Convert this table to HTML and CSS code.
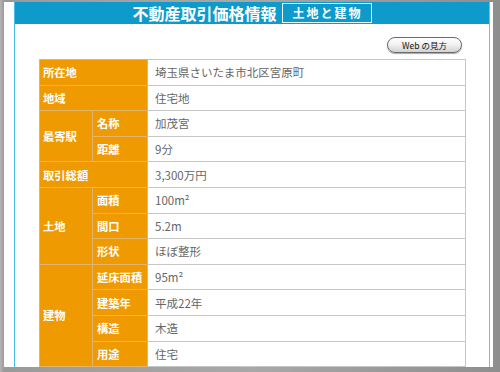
FILE: index.html
```html
<!DOCTYPE html>
<html lang="ja">
<head>
<meta charset="utf-8">
<link rel="stylesheet" href="styles.css">
</head>
<body>
<div class="frame">
  <div class="sheet">
    <div class="panel">
      <div class="header">
        <span class="title">不動産取引価格情報</span>
        <span class="tag">土地と建物</span>
      </div>
      <div class="content">
        <div class="tools"><span class="btn">Web の見方</span></div>
        <table class="info">
          <colgroup><col class="c1"><col class="c2"><col class="c3"></colgroup>
          <tr><th colspan="2" class="main">所在地</th><td>埼玉県さいたま市北区宮原町</td></tr>
          <tr><th colspan="2" class="main">地域</th><td>住宅地</td></tr>
          <tr><th rowspan="2" class="main">最寄駅</th><th class="sub">名称</th><td>加茂宮</td></tr>
          <tr><th class="sub">距離</th><td>9分</td></tr>
          <tr><th colspan="2" class="main">取引総額</th><td>3,300万円</td></tr>
          <tr><th rowspan="3" class="main">土地</th><th class="sub">面積</th><td>100m²</td></tr>
          <tr><th class="sub">間口</th><td>5.2m</td></tr>
          <tr><th class="sub">形状</th><td>ほぼ整形</td></tr>
          <tr><th rowspan="4" class="main">建物</th><th class="sub">延床面積</th><td>95m²</td></tr>
          <tr><th class="sub">建築年</th><td>平成22年</td></tr>
          <tr><th class="sub">構造</th><td>木造</td></tr>
          <tr><th class="sub">用途</th><td>住宅</td></tr>
        </table>
      </div>
    </div>
  </div>
</div>
</body>
</html>
```
FILE: styles.css
```css
html, body {
  margin: 0;
  padding: 0;
}
body {
  width: 500px;
  height: 372px;
  overflow: hidden;
  font-family: "Noto Sans CJK JP", "Noto Sans", sans-serif;
}
.frame {
  width: 500px;
  height: 372px;
  box-sizing: border-box;
  padding: 2px 7px 5px 4px;
  background: linear-gradient(to right, #b4b4b4 0, #9a9a9a 4px, #a8a8a8 50%, #8e8e8e 100%);
}
.sheet {
  height: 100%;
  background: #fff;
  padding: 0 3px 0 10px;
  box-sizing: border-box;
  overflow: hidden;
}
.panel {
  height: 100%;
  border-left: 1px solid #45bfe6;
  border-right: 1px solid #7bbfcb;
  display: flex;
  flex-direction: column;
}
.header {
  height: 22px;
  flex: none;
  background: #0e9bcc;
  display: flex;
  align-items: center;
  justify-content: center;
  gap: 5px;
  color: #fff;
}
.title {
  font-size: 16px;
  font-weight: bold;
  line-height: 20px;
}
.tag {
  box-sizing: border-box;
  height: 20px;
  border: 1px solid #e8f6fb;
  font-size: 12px;
  font-weight: bold;
  letter-spacing: 2px;
  line-height: 18px;
  padding: 0 8px 0 10px;
}
.content {
  padding: 13px 24px 0 24px;
}
.tools {
  display: flex;
  justify-content: flex-end;
  padding-right: 3px;
  margin-bottom: 6px;
}
.btn {
  box-sizing: border-box;
  width: 75px;
  height: 16px;
  border: 1px solid #6a6a6a;
  border-radius: 8px;
  background: linear-gradient(to bottom, #ffffff 0%, #f2f2f2 45%, #d2d2d2 100%);
  box-shadow: 0 1px 1px rgba(0,0,0,0.35);
  font-size: 8.5px;
  line-height: 14px;
  text-align: center;
  color: #111;
}
.info {
  width: 426px;
  border-collapse: collapse;
  table-layout: fixed;
}
.c1 { width: 53px; }
.c2 { width: 55px; }
.c3 { width: 318px; }
.info tr {
  height: 25.6px;
}
.info th {
  background: #ee9a00;
  color: #fff;
  font-weight: bold;
  font-size: 11.3px;
  text-align: left;
  border: 1px solid #e3b46e;
  padding: 0;
  line-height: 14px;
}
.info th.main { padding-left: 3px; }
.info th.sub { padding-left: 4px; }
.info td {
  border: 1px solid #c6c6c6;
  color: #666;
  font-size: 11.5px;
  padding: 0 0 0 7px;
  line-height: 14px;
}
```
